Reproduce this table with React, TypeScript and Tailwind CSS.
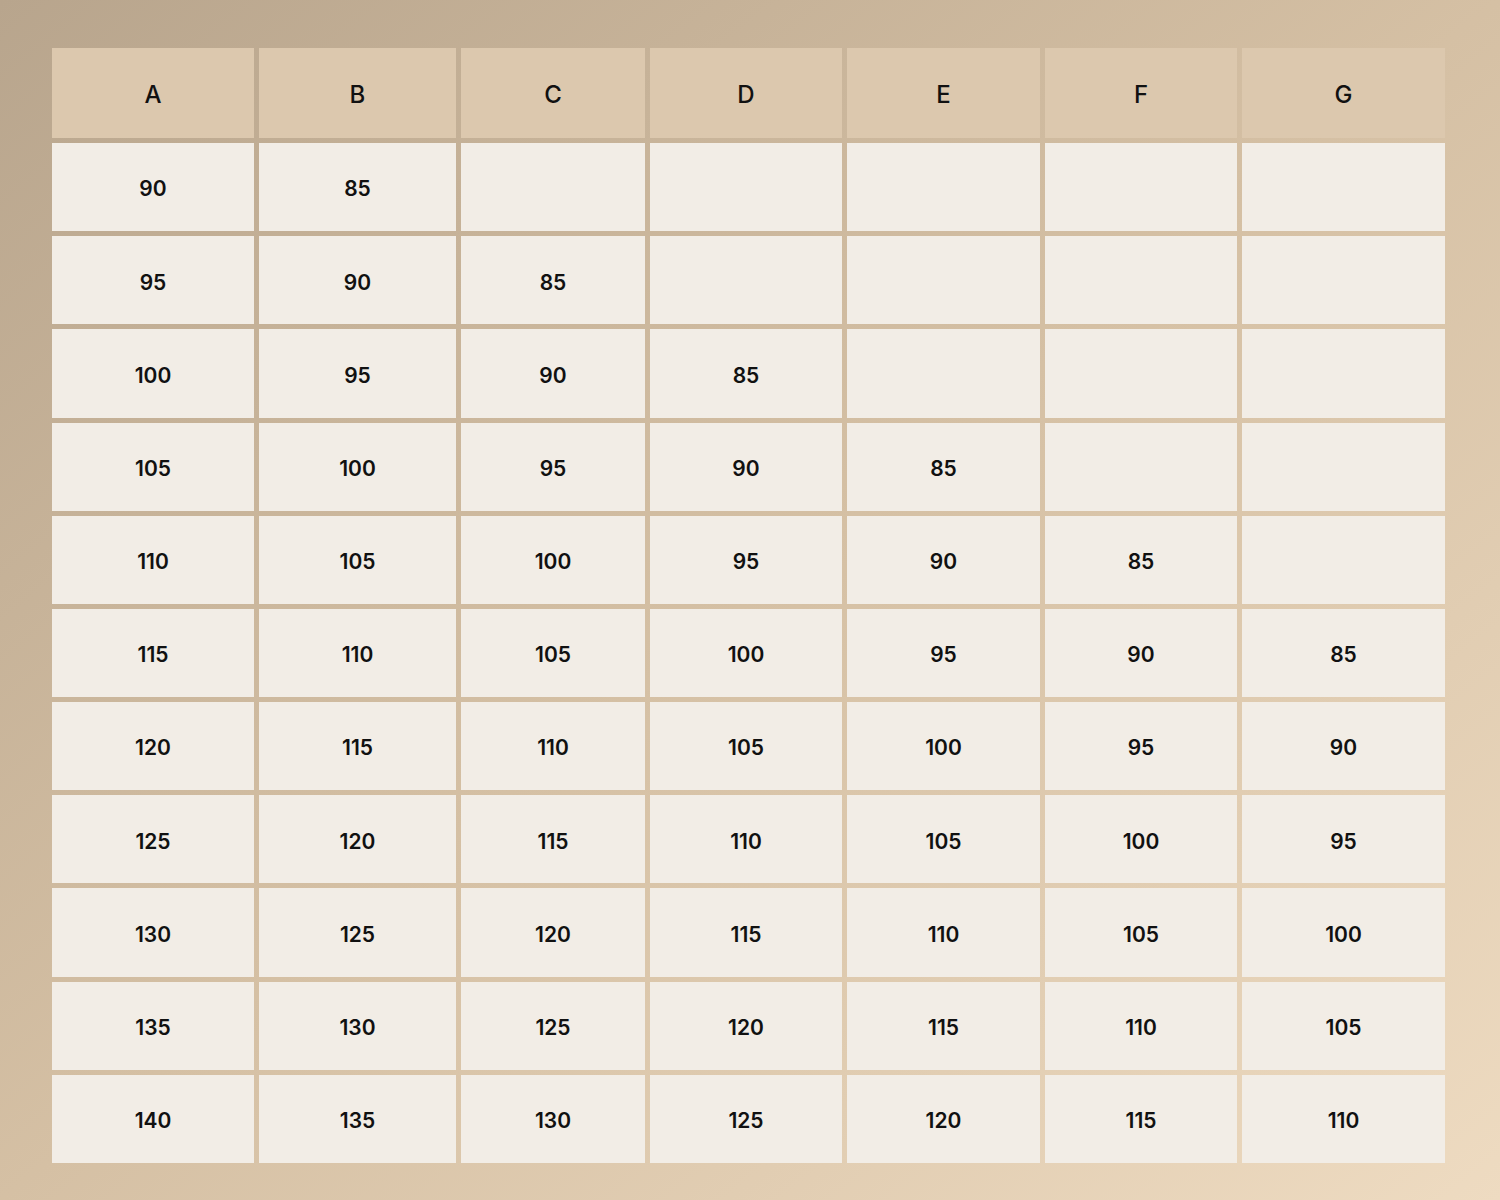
const headers = ['A', 'B', 'C', 'D', 'E', 'F', 'G'];

// each row starts at A and steps down by 5 to 85, then blank
const rows: (number | null)[][] = Array.from({ length: 11 }, (_, r) => {
  const start = 90 + r * 5;
  return headers.map((_, c) => {
    const v = start - c * 5;
    return v >= 85 ? v : null;
  });
});

export default function App() {
  return (
    <div
      className="min-h-[1200px] w-full bg-gradient-to-br from-[#b8a58d] via-[#d5c0a4] to-[#eedbc1] pl-[52px] pt-[48px]"
      style={{ fontFamily: 'Inter, "Noto Sans", sans-serif' }}
    >
      <div className="grid h-[1115px] w-[1393px] grid-cols-[202px_197px_184px_192px_193px_192px_203px] grid-rows-[90px_repeat(11,minmax(0,1fr))] gap-[5px]">
        {headers.map((h) => (
          <div
            key={h}
            className="flex items-center justify-center bg-[#dcc8ae] pt-[4px] text-[24px] font-medium text-[#111]"
          >
            {h}
          </div>
        ))}
        {rows.map((row, r) =>
          row.map((v, c) => (
            <div
              key={`${r}-${c}`}
              className="flex items-center justify-center bg-[#f2ede6] pt-[4px] text-[21px] font-semibold text-[#111]"
            >
              {v ?? ''}
            </div>
          ))
        )}
      </div>
    </div>
  );
}
